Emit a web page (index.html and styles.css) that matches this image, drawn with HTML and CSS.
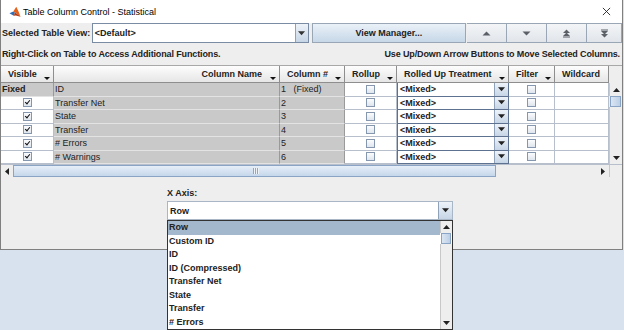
FILE: index.html
```html
<!DOCTYPE html>
<html lang="en">
<head>
    <meta charset="UTF-8">
    <title>Table Column Control - Statistical</title>
    <link rel="stylesheet" href="styles.css">
</head>
<body>

<div class="window">
    <div class="titlebar"><!--标题栏-->
        <svg class="app-icon" viewBox="0 0 14 14">
            <path d="M0.5 8.5 L5 6.5 L7 7.5 L5.5 11.5 Z" fill="#2f6db5"/>
            <path d="M5 6.5 L8.5 1 L11 6 L13.5 12.5 L10 9.5 L7 7.5 Z" fill="#e5621b"/>
            <path d="M7 7.5 L10 9.5 L13.5 12.5 L8 11 L5.5 11.5 Z" fill="#b23a12"/>
        </svg>
        <span class="title">Table Column Control - Statistical</span>
        <svg class="close" viewBox="0 0 10 10"><path d="M1 1 L9 9 M9 1 L1 9" stroke="#222" stroke-width="1"/></svg>
    </div>

    <div class="toolbar">
        <span class="lbl view-lbl">Selected Table View:</span>
        <div class="combo view-combo">
            <span class="combo-text">&lt;Default&gt;</span>
            <span class="combo-btn"><svg viewBox="0 0 8 5"><path d="M0 0 H8 L4 4.5 Z" fill="#333"/></svg></span>
        </div>
        <div class="btn view-btn">View Manager...</div>
        <div class="btn arrow-btn"><svg viewBox="0 0 9 9"><path d="M0.5 6.5 L4.5 2.5 L8.5 6.5 Z" fill="#5b6068"/></svg></div>
        <div class="btn arrow-btn"><svg viewBox="0 0 9 9"><path d="M0.5 2.5 L4.5 6.5 L8.5 2.5 Z" fill="#5b6068"/></svg></div>
        <div class="btn arrow-btn"><svg viewBox="0 0 9 9"><path d="M1 4 L4.5 0.5 L8 4 Z M1 7 L4.5 3.5 L8 7 Z M1 7.5 H8 V8.5 H1 Z" fill="#5b6068"/></svg></div>
        <div class="btn arrow-btn last"><svg viewBox="0 0 9 9"><path d="M1 0.5 H8 V1.5 H1 Z M1 2 L4.5 5.5 L8 2 Z M1 5 L4.5 8.5 L8 5 Z" fill="#5b6068"/></svg></div>
    </div>

    <div class="hints">
        <span>Right-Click on Table to Access Additional Functions.</span>
        <span>Use Up/Down Arrow Buttons to Move Selected Columns.</span>
    </div>

    <div class="table-wrap">
        <div class="grid">
            <div class="th">Visible<i class="sort"></i></div>
            <div class="th right">Column Name<i class="sort"></i></div>
            <div class="th">Column #<i class="sort"></i></div>
            <div class="th">Rollup<i class="sort"></i></div>
            <div class="th">Rolled Up Treatment<i class="sort"></i></div>
            <div class="th">Filter<i class="sort"></i></div>
            <div class="th">Wildcard</div>

            <div class="td gray bold">Fixed</div>
            <div class="td gray">ID</div>
            <div class="td gray">1&nbsp;&nbsp;&nbsp;(Fixed)</div>
            <div class="td center"><span class="chk"></span></div>
            <div class="td mixed"><span class="combo-text">&lt;Mixed&gt;</span><span class="combo-btn"><svg viewBox="0 0 8 5"><path d="M0 0 H8 L4 4.5 Z" fill="#222"/></svg></span></div>
            <div class="td center"><span class="chk"></span></div>
            <div class="td"></div>

            <div class="td center"><span class="chk on"></span></div>
            <div class="td gray">Transfer Net</div>
            <div class="td gray">2</div>
            <div class="td center"><span class="chk"></span></div>
            <div class="td mixed"><span class="combo-text">&lt;Mixed&gt;</span><span class="combo-btn"><svg viewBox="0 0 8 5"><path d="M0 0 H8 L4 4.5 Z" fill="#222"/></svg></span></div>
            <div class="td center"><span class="chk"></span></div>
            <div class="td"></div>

            <div class="td center"><span class="chk on"></span></div>
            <div class="td gray">State</div>
            <div class="td gray">3</div>
            <div class="td center"><span class="chk"></span></div>
            <div class="td mixed"><span class="combo-text">&lt;Mixed&gt;</span><span class="combo-btn"><svg viewBox="0 0 8 5"><path d="M0 0 H8 L4 4.5 Z" fill="#222"/></svg></span></div>
            <div class="td center"><span class="chk"></span></div>
            <div class="td"></div>

            <div class="td center"><span class="chk on"></span></div>
            <div class="td gray">Transfer</div>
            <div class="td gray">4</div>
            <div class="td center"><span class="chk"></span></div>
            <div class="td mixed"><span class="combo-text">&lt;Mixed&gt;</span><span class="combo-btn"><svg viewBox="0 0 8 5"><path d="M0 0 H8 L4 4.5 Z" fill="#222"/></svg></span></div>
            <div class="td center"><span class="chk"></span></div>
            <div class="td"></div>

            <div class="td center"><span class="chk on"></span></div>
            <div class="td gray"># Errors</div>
            <div class="td gray">5</div>
            <div class="td center"><span class="chk"></span></div>
            <div class="td mixed"><span class="combo-text">&lt;Mixed&gt;</span><span class="combo-btn"><svg viewBox="0 0 8 5"><path d="M0 0 H8 L4 4.5 Z" fill="#222"/></svg></span></div>
            <div class="td center"><span class="chk"></span></div>
            <div class="td"></div>

            <div class="td center"><span class="chk on"></span></div>
            <div class="td gray"># Warnings</div>
            <div class="td gray">6</div>
            <div class="td center"><span class="chk"></span></div>
            <div class="td mixed"><span class="combo-text">&lt;Mixed&gt;</span><span class="combo-btn"><svg viewBox="0 0 8 5"><path d="M0 0 H8 L4 4.5 Z" fill="#222"/></svg></span></div>
            <div class="td center"><span class="chk"></span></div>
            <div class="td"></div>
        </div>
        <div class="vscroll"><!--竖向滚动条-->
            <div class="head-gap"></div>
            <div class="sb-btn"><svg viewBox="0 0 7 4"><path d="M0 4 L3.5 0 L7 4 Z" fill="#222"/></svg></div>
            <div class="sb-thumb v"></div>
            <div class="sb-track"></div>
            <div class="sb-btn"><svg viewBox="0 0 7 4"><path d="M0 0 L3.5 4 L7 0 Z" fill="#222"/></svg></div>
        </div>
    </div>

    <div class="hscroll"><!--横向滚动条-->
        <div class="sb-btn h"><svg viewBox="0 0 4 7"><path d="M4 0 L0 3.5 L4 7 Z" fill="#222"/></svg></div>
        <div class="sb-thumb h"><i class="grip"></i></div>
        <div class="sb-track h"></div>
        <div class="sb-btn h"><svg viewBox="0 0 4 7"><path d="M0 0 L4 3.5 L0 7 Z" fill="#222"/></svg></div>
        <div class="corner"></div>
    </div>

    <div class="xaxis">
        <div class="lbl axis-lbl">X Axis:</div>
        <div class="axis-box">
            <div class="combo axis-combo">
                <span class="combo-text">Row</span>
                <span class="combo-btn"><svg viewBox="0 0 8 5"><path d="M0 0 H8 L4 4.5 Z" fill="#222"/></svg></span>
            </div>
            <div class="popup"><!--下拉列表-->
                <ul class="options">
                    <li class="sel">Row</li>
                    <li>Custom ID</li>
                    <li>ID</li>
                    <li>ID (Compressed)</li>
                    <li>Transfer Net</li>
                    <li>State</li>
                    <li>Transfer</li>
                    <li># Errors</li>
                </ul>
                <div class="vscroll pop">
                    <div class="sb-btn"><svg viewBox="0 0 7 4"><path d="M0 4 L3.5 0 L7 4 Z" fill="#222"/></svg></div>
                    <div class="sb-thumb v"></div>
                    <div class="sb-track"></div>
                    <div class="sb-btn"><svg viewBox="0 0 7 4"><path d="M0 0 L3.5 4 L7 0 Z" fill="#222"/></svg></div>
                </div>
            </div>
        </div>
    </div>
</div>

</body>
</html>
```

FILE: styles.css
```css
body{
    margin: 0;
    width: 624px;
    height: 330px;
    overflow: hidden;
    background: #d8e1ee;
    font-family: "Liberation Sans", Arial, sans-serif;
    font-size: 9px;
    color: #222;
}
.window{
    width: 621px;
    height: 249px;
    border: 1px solid #808080;
    border-top: none;
    background: #eeeeee;
}

/* 标题栏 */
.titlebar{
    height: 23px;
    background: #fff;
    display: flex;
    align-items: center;
    padding-left: 8px;
}
.app-icon{
    width: 12px;
    height: 12px;
    margin-right: 2px;
}
.title{
    flex: 1;
    font-size: 9px;
    color: #000;
}
.close{
    width: 9px;
    height: 9px;
    margin-right: 11px;
}

/* 工具栏 */
.toolbar{
    display: flex;
    align-items: center;
    height: 20px;
    padding-left: 1px;
}
.lbl{
    font-weight: bold;
}
.view-lbl{
    width: 90px;
}
.combo{
    display: flex;
    background: #fff;
    border: 1px solid #7a8ca3;
    box-sizing: border-box;
}
.combo-text{
    flex: 1;
    padding-left: 2px;
    font-weight: bold;
    display: flex;
    align-items: center;
}
.combo-btn{
    width: 12px;
    display: flex;
    align-items: center;
    justify-content: center;
    background: linear-gradient(#eef3f9, #c6d5e6);
    border-left: 1px solid #8fa2ba;
}
.combo-btn svg{
    width: 7px;
    height: 5px;
}
.view-combo{
    width: 217px;
    height: 20px;
    margin-right: 3px;
}
.btn{
    height: 20px;
    box-sizing: border-box;
    display: flex;
    align-items: center;
    justify-content: center;
    border: 1px solid #99a6b5;
    font-weight: bold;
}
.view-btn{
    width: 155px;
    background: linear-gradient(#eaf1f8, #d4e1ee 60%, #c8d7e7);
    margin-right: 1px;
}
.arrow-btn{
    width: 40px;
    background: linear-gradient(#f3f5f7, #e1e5ea);
    border-left: none;
}
.arrow-btn.last{
    width: 35px;
}
.arrow-btn svg{
    width: 9px;
    height: 9px;
}

/* 提示文字 */
.hints{
    height: 22px;
    display: flex;
    align-items: center;
    justify-content: space-between;
    padding: 0 2px 0 1px;
    font-weight: bold;
    letter-spacing: -0.13px;
}

/* 表格 */
.table-wrap{
    display: flex;
    border-top: 1px solid #a8a8a8;
}
.grid{
    display: grid;
    grid-template-columns: 53px 226px 65px 52px 112px 46px 54px;
    grid-template-rows: 17px repeat(6, 13.5px);
}
.th{
    position: relative;
    display: flex;
    align-items: center;
    padding-left: 7px;
    background: linear-gradient(#fdfdfd, #e6e6e6);
    border-right: 1px solid #8e8e8e;
    border-bottom: 1px solid #8e8e8e;
    font-weight: bold;
}
.th.right{
    justify-content: flex-end;
    padding-right: 17px;
}
.sort{
    position: absolute;
    right: 3px;
    bottom: 2px;
    border-left: 3px solid transparent;
    border-right: 3px solid transparent;
    border-top: 3px solid #111;
}
.td{
    display: flex;
    align-items: center;
    padding-left: 1px;
    background: #fff;
    border-right: 1px solid #b6bfcb;
    border-bottom: 1px solid #b6bfcb;
    white-space: nowrap;
    overflow: hidden;
}
.td.gray{
    background: #c9c9c9;
    border-color: #e3e3e3 #9a9a9a;
}
.td.bold{
    font-weight: bold;
}
.td.center{
    justify-content: center;
    padding-left: 0;
}
.td.mixed{
    padding: 0;
    align-items: stretch;
    border: 1px solid #5c7290;
    border-top: none;
}
.td.mixed .combo-btn{
    width: 13px;
}
.chk{
    width: 9px;
    height: 9px;
    border: 1px solid #8597ae;
    background: linear-gradient(#fbfcfd, #dfe6ee);
    box-sizing: border-box;
}
.chk.on{
    position: relative;
}
.chk.on::after{
    content: "";
    position: absolute;
    left: 2px;
    top: 0px;
    width: 2px;
    height: 4px;
    border-right: 1.5px solid #111;
    border-bottom: 1.5px solid #111;
    transform: rotate(40deg);
}

/* 滚动条 */
.vscroll{
    width: 13px;
    display: flex;
    flex-direction: column;
}
.head-gap{
    height: 17px;
}
.sb-btn{
    height: 13px;
    display: flex;
    align-items: center;
    justify-content: center;
    background: #eeeeee;
    border-left: 1px solid #c8c8c8;
    box-sizing: border-box;
}
.sb-btn svg{
    width: 7px;
    height: 4px;
}
.sb-thumb.v{
    height: 11px;
    margin: 0 1px;
    border: 1px solid #8aa4c6;
    background: linear-gradient(90deg, #dbe6f3, #bccfe6);
    box-sizing: border-box;
}
.sb-track{
    flex: 1;
    background: #eeeeee;
    border-left: 1px solid #c8c8c8;
}
.hscroll{
    display: flex;
    height: 12px;
    border-top: 1px solid #b6bfcb;
}
.sb-btn.h{
    width: 12px;
    height: auto;
    border-left: none;
}
.sb-btn.h svg{
    width: 4px;
    height: 7px;
}
.sb-thumb.h{
    width: 483px;
    display: flex;
    align-items: center;
    justify-content: center;
    border: 1px solid #8aa4c6;
    background: linear-gradient(#e6eef8, #c6d7eb);
    box-sizing: border-box;
}
.grip{
    width: 6px;
    height: 6px;
    margin-left: 3px;
    background: repeating-linear-gradient(90deg, #8fa6c6 0 1px, #eef3f9 1px 2px);
}
.sb-track.h{
    width: 101px;
    flex: none;
    border-left: none;
}
.corner{
    flex: 1;
    border-left: 1px solid #c8c8c8;
}

/* X轴选择 */
.xaxis{
    padding: 7px 0 0 166px;
}
.axis-lbl{
    height: 17px;
    display: flex;
    align-items: center;
}
.axis-box{
    position: relative;
    width: 286px;
}
.axis-combo{
    height: 19px;
    border-color: #a9b6c6;
}
.axis-combo .combo-btn{
    width: 13px;
}
.popup{
    position: absolute;
    left: 0;
    top: 19px;
    width: 286px;
    height: 110px;
    box-sizing: border-box;
    border: 1px solid #333;
    background: #fff;
    display: flex;
}
.options{
    flex: 1;
    margin: 0;
    padding: 0;
    list-style: none;
    font-weight: bold;
}
.options li{
    height: 13.5px;
    line-height: 13.5px;
    padding-left: 1px;
}
.options li.sel{
    background: #a3b8cc;
}
.vscroll.pop{
    width: 12px;
}
.vscroll.pop .sb-btn{
    height: 12px;
}
```
